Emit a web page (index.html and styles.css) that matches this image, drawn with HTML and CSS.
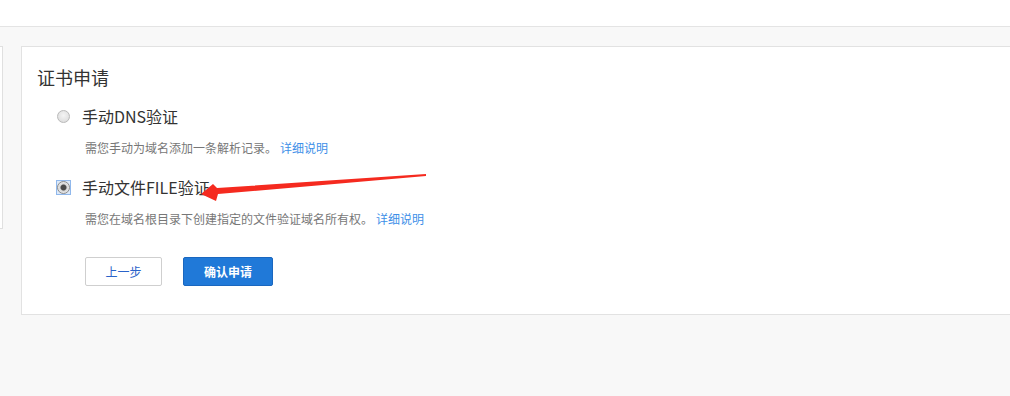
FILE: index.html
```
<!DOCTYPE html>
<html>
<head>
    <meta charset="utf-8">
    <title>证书申请</title>
    <link rel="stylesheet" href="styles.css">
</head>
<body>
    <div class="topbar"></div>

    <div class="content">
        <div class="sidebar"></div>

        <div class="card">
            <h2 class="card-title">证书申请</h2>

            <div class="option">
                <label class="option-label">
                    <span class="radio-wrap"><input type="radio" name="verify" value="dns"></span>
                    手动DNS验证
                </label>
                <p class="option-desc">需您手动为域名添加一条解析记录。<a href="#" class="more">详细说明</a></p>
            </div>

            <div class="option option-file">
                <label class="option-label">
                    <span class="radio-wrap radio-focus"><input type="radio" name="verify" value="file" checked></span>
                    手动文件FILE验证
                </label>
                <p class="option-desc">需您在域名根目录下创建指定的文件验证域名所有权。<a href="#" class="more">详细说明</a></p>
            </div>

            <div class="actions">
                <button type="button" class="btn btn-default">上一步</button>
                <button type="button" class="btn btn-primary">确认申请</button>
            </div>
        </div>
    </div>

    <!-- annotation arrow drawn over the page -->
    <svg class="arrow" width="1010" height="396" viewBox="0 0 1010 396">
        <polygon points="201,194 213,184 217,188 426,174 426,176 218,194 216,201" fill="#f52a1f"/>
    </svg>
</body>
</html>
```

FILE: styles.css
```
body {
    font-family: "Noto Sans CJK SC", "Noto Sans", sans-serif;
    background-color: #f8f8f8;
    margin: 0;
    padding: 0;
    overflow: hidden;
    height: 396px;
    position: relative;
}

.topbar {
    height: 26px;
    background-color: #fff;
    border-bottom: 1px solid #e4e4e4;
}

.content {
    display: flex;
    align-items: flex-start;
    gap: 18px;
    padding-top: 19px;
}

.sidebar {
    flex: none;
    width: 2px;
    height: 181px;
    background-color: #fff;
    border: 1px solid #e0e0e0;
    border-left: none;
}

.card {
    flex: none;
    width: 1000px;
    height: 250px;
    background-color: #fff;
    border: 1px solid #e2e2e2;
    padding: 17px 15px 0;
    box-sizing: content-box;
}

.card-title {
    font-size: 18px;
    font-weight: normal;
    line-height: 26px;
    color: #333;
    margin: 0 0 14px;
}

.option {
    margin-left: 20px;
}

.option-file {
    margin-top: 18px;
}

.option-label {
    display: flex;
    align-items: center;
    font-size: 16px;
    line-height: 24px;
    height: 24px;
    color: #333;
    cursor: pointer;
}

.radio-wrap {
    display: inline-flex;
    width: 15px;
    height: 15px;
    align-items: center;
    justify-content: center;
    margin-right: 11px;
    border: 1px solid transparent;
    box-sizing: border-box;
    margin-left: -1px;
}

.radio-focus {
    border-color: #90b8ec;
    background-color: #dce9f9;
}

input[type="radio"] {
    appearance: none;
    -webkit-appearance: none;
    width: 13px;
    height: 13px;
    margin: 0;
    border-radius: 50%;
    border: 1px solid #b9b9b9;
    background: radial-gradient(circle at 50% 40%, #f4f4f4, #d8d8d8);
    box-sizing: border-box;
}

input[type="radio"]:checked {
    background: radial-gradient(circle, #4a4a4a 0 2.5px, #d6d6d6 3.5px, #ececec 6px);
    border-color: #8a8a8a;
}

.option-desc {
    font-size: 12px;
    line-height: 18px;
    color: #777;
    margin: 11px 0 0 28px;
}

.more {
    color: #3d8fe8;
    text-decoration: none;
    margin-left: 3px;
}

.actions {
    display: flex;
    gap: 21px;
    margin: 29px 0 0 48px;
}

.btn {
    height: 29px;
    font-family: inherit;
    font-size: 12px;
    border-radius: 2px;
    cursor: pointer;
    padding: 0;
}

.btn-default {
    width: 77px;
    background-color: #fff;
    color: #2a63c9;
    border: 1px solid #cfcfcf;
}

.btn-primary {
    width: 90px;
    background-color: #2079d8;
    color: #fff;
    border: 1px solid #1a67bf;
    font-weight: bold;
}

.btn-primary:hover {
    background-color: #2c86e4;
}

.arrow {
    position: absolute;
    left: 0;
    top: 0;
    pointer-events: none;
}
```
